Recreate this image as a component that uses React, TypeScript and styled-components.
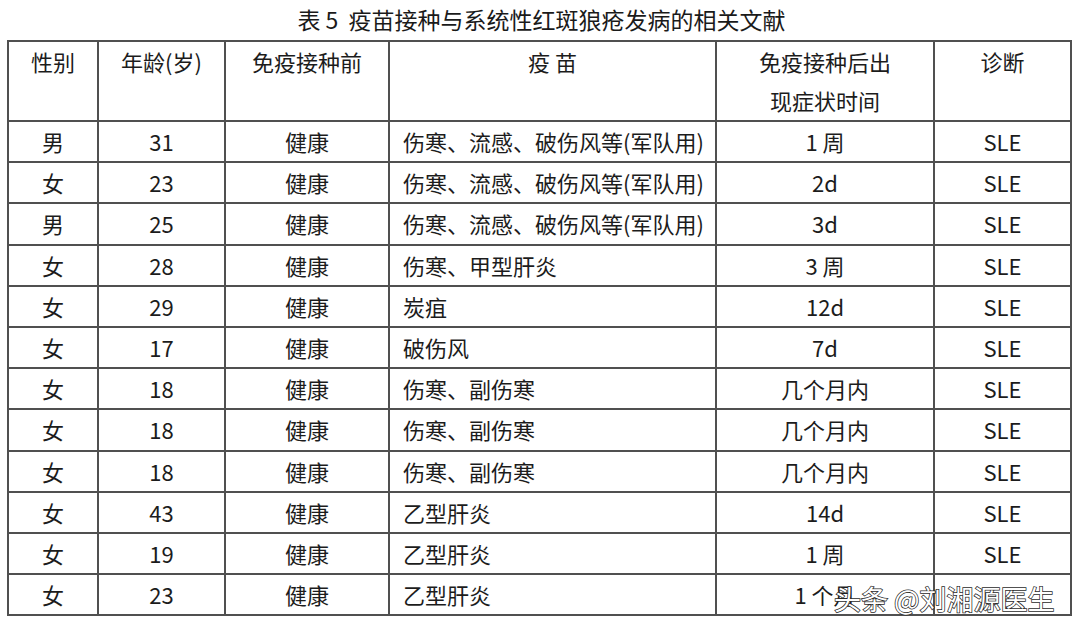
import React from "react";
import styled, { createGlobalStyle } from "styled-components";

const GlobalStyle = createGlobalStyle`
    html, body {
        margin: 0;
        padding: 0;
        background: #ffffff;
    }
    body {
        font-family: "Noto Sans CJK SC", "Noto Sans", sans-serif;
        color: #1c1c1c;
    }
`;

const Page = styled.div`
    position: relative;
    width: 1080px;
    height: 632px;
    padding-left: 7px;
    box-sizing: border-box;
    overflow: hidden;
`;

const Title = styled.div`
    height: 40px;
    line-height: 38px;
    font-size: 23px;
    text-align: center;
    padding-right: 4px;
    white-space: pre;
    color: #1a1a1a;
`;

const Table = styled.table`
    border-collapse: collapse;
    width: 1063px;
    table-layout: fixed;
    font-size: 22px;
`;

const HeadCell = styled.th`
    border: 2px solid #505050;
    font-weight: 400;
    vertical-align: top;
    text-align: center;
    line-height: 39px;
    height: 77px;
    padding: 0;
`;

const Cell = styled.td<{ $left?: boolean }>`
    border: 2px solid #505050;
    height: 39.2px;
    padding: ${(p) => (p.$left ? "0 0 0 13px" : "0")};
    text-align: ${(p) => (p.$left ? "left" : "center")};
    vertical-align: middle;
    line-height: 39px;
    white-space: nowrap;
`;

const Watermark = styled.div`
    position: absolute;
    left: 834px;
    top: 582px;
    font-size: 27px;
    line-height: 34px;
    color: #ffffff;
    -webkit-text-stroke: 1.5px #2a2a2a;
    paint-order: stroke fill;
    white-space: pre;
`;

const WIDTHS = [90, 127, 164, 327, 218, 137];

const ROWS: [string, string, string, string, string][] = [
    ["男", "31", "伤寒、流感、破伤风等(军队用)", "1 周", "SLE"],
    ["女", "23", "伤寒、流感、破伤风等(军队用)", "2d", "SLE"],
    ["男", "25", "伤寒、流感、破伤风等(军队用)", "3d", "SLE"],
    ["女", "28", "伤寒、甲型肝炎", "3 周", "SLE"],
    ["女", "29", "炭疽", "12d", "SLE"],
    ["女", "17", "破伤风", "7d", "SLE"],
    ["女", "18", "伤寒、副伤寒", "几个月内", "SLE"],
    ["女", "18", "伤寒、副伤寒", "几个月内", "SLE"],
    ["女", "18", "伤寒、副伤寒", "几个月内", "SLE"],
    ["女", "43", "乙型肝炎", "14d", "SLE"],
    ["女", "19", "乙型肝炎", "1 周", "SLE"],
    ["女", "23", "乙型肝炎", "1 个月", ""],
];

const App: React.FC = () => {
    return (
        <>
            <GlobalStyle />
            <Page>
                <Title>表 5  疫苗接种与系统性红斑狼疮发病的相关文献</Title>
                <Table>
                    <colgroup>
                        {WIDTHS.map((w, i) => (
                            <col key={i} style={{ width: w }} />
                        ))}
                    </colgroup>
                    <thead>
                        <tr>
                            <HeadCell>性别</HeadCell>
                            <HeadCell>年龄(岁)</HeadCell>
                            <HeadCell>免疫接种前</HeadCell>
                            <HeadCell>疫 苗</HeadCell>
                            <HeadCell>
                                免疫接种后出
                                <br />
                                现症状时间
                            </HeadCell>
                            <HeadCell>诊断</HeadCell>
                        </tr>
                    </thead>
                    <tbody>
                        {ROWS.map(([sex, age, vaccine, time, diag], i) => (
                            <tr key={i}>
                                <Cell>{sex}</Cell>
                                <Cell>{age}</Cell>
                                <Cell>健康</Cell>
                                <Cell $left>{vaccine}</Cell>
                                <Cell>{time}</Cell>
                                <Cell>{diag}</Cell>
                            </tr>
                        ))}
                    </tbody>
                </Table>
                <Watermark>头条 @刘湘源医生</Watermark>
            </Page>
        </>
    );
};

export default App;
